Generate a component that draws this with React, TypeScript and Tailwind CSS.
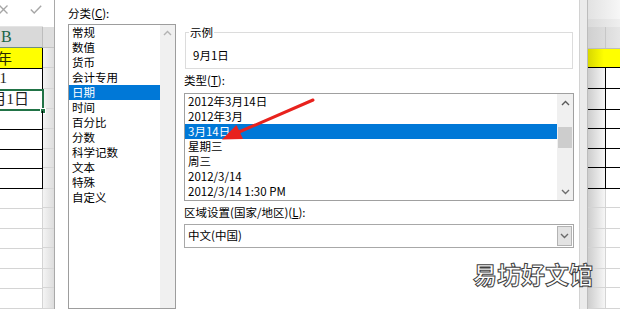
import React from "react";

const CATEGORIES = ["常规", "数值", "货币", "会计专用", "日期", "时间", "百分比", "分数", "科学记数", "文本", "特殊", "自定义"];
const TYPES = ["2012年3月14日", "2012年3月", "3月14日", "星期三", "周三", "2012/3/14", "2012/3/14 1:30 PM"];

// sheet rows below the yellow one (y 70 onwards)
const ROWS = [
  { h: "h-[21px]", dark: true },
  { h: "h-[21px]", dark: true },
  { h: "h-[20px]", dark: true },
  { h: "h-[20px]", dark: true },
  { h: "h-[20px]", dark: true },
  { h: "h-[21px]", dark: true },
  { h: "h-[20px]", dark: false },
  { h: "h-[21px]", dark: false },
  { h: "h-[20px]", dark: false },
  { h: "h-[21px]", dark: false },
  { h: "h-[20px]", dark: false },
  { h: "h-[21px]", dark: false },
];

function Chevron({ up, className }: { up?: boolean; className?: string }) {
  return (
    <svg width="9" height="6" viewBox="0 0 9 6" className={className}>
      <polyline
        points={up ? "1,5 4.5,1.5 8,5" : "1,1 4.5,4.5 8,1"}
        fill="none"
        stroke="currentColor"
        strokeWidth="1.4"
      />
    </svg>
  );
}

function LeftSheet() {
  return (
    <div className="flex h-full w-[55px] shrink-0">
      {/* column B */}
      <div className="flex w-[43px] flex-col">
        <div className="relative h-[28px] border-b border-[#e4e4e4] bg-white">
          <svg className="absolute left-[-1px] top-[5px]" width="9" height="9" viewBox="0 0 9 9">
            <path d="M0.5 0.5 L8.5 8.5 M8.5 0.5 L0.5 8.5" stroke="#a6a6a6" strokeWidth="1.3" />
          </svg>
          <svg className="absolute left-[30px] top-[5px]" width="12" height="9" viewBox="0 0 12 9">
            <path d="M0.8 4.6 L4.2 8 L11.2 0.8" fill="none" stroke="#a6a6a6" strokeWidth="1.4" />
          </svg>
        </div>
        <div className="flex h-[21px] items-center border-r border-b border-r-[#bdbdbd] border-b-[#6f8f7f] bg-[#d9d9d9] pl-[1px] font-['Liberation_Serif',serif] text-[16px] text-[#1a6446]">
          B
        </div>
        <div className="flex h-[21px] items-center justify-end overflow-hidden border-r border-b border-black bg-[#ffff00] pr-[30px] text-[15px] whitespace-nowrap text-[#2a2a00]">
          2020年
        </div>
        {ROWS.map((r, i) => (
          <div
            key={i}
            className={`relative ${r.h} border-r border-b ${r.dark ? "border-black" : "border-[#d4d4d4]"}`}
          >
            {i === 0 && (
              <div className="flex h-full items-center justify-end pr-[35px] font-['Liberation_Serif',serif] text-[15px] text-[#222]">
                1
              </div>
            )}
            {i === 1 && (
              <>
                <div className="flex h-full items-center justify-end overflow-hidden pr-[13px] font-['Liberation_Serif','Noto_Sans_CJK_SC',serif] text-[15px] whitespace-nowrap text-[#222]">
                  9月1日
                </div>
                <div className="absolute -top-px left-[-4px] right-[-2px] -bottom-px border-2 border-[#217346]" />
                <div className="absolute right-[-4px] bottom-[-4px] h-[6px] w-[6px] border border-white bg-[#217346]" />
              </>
            )}
          </div>
        ))}
      </div>
      {/* column C shaded by dialog */}
      <div className="flex w-[11px] flex-col">
        <div className="h-[28px] bg-white" />
        <div className="h-[21px] border-b border-[#c4c4c4] bg-[#dedede]" />
        <div className="h-[21px] border-b border-[#d2d2d2] bg-linear-to-r from-[#f4f4f4] to-[#dddddd]" />
        {ROWS.map((r, i) => (
          <div key={i} className={`${r.h} border-b border-[#d6d6d6] bg-linear-to-r from-[#f4f4f4] to-[#dddddd]`} />
        ))}
      </div>
      <div className="w-px bg-[#a9a9a9]" />
    </div>
  );
}

function RightSheet() {
  return (
    <div className="flex h-full w-[32px] shrink-0 flex-col overflow-hidden">
      <div className="h-[19px] bg-linear-to-r from-[#e2e2e2] to-[#f7f7f7]" />
      <div className="h-[9px] bg-linear-to-r from-[#dadada] to-[#efefef]" />
      <div className="flex h-[22px] border-b border-[#bdbdbd] bg-linear-to-r from-[#d0d0d0] to-[#e6e6e6]">
        <div className="w-[18px] border-r border-[#c7c7c7]" />
      </div>
      <div className="h-[20px] border-b border-black bg-linear-to-r from-[#d8d800] via-[#ffff00] to-[#ffff00]" />
      {ROWS.map((r, i) => (
        <div key={i} className={`flex ${r.h} border-b ${r.dark ? "border-black" : "border-[#d4d4d4]"}`}>
          <div
            className={`w-[18px] border-r bg-linear-to-r from-[#cdcdcd] to-[#f6f6f6] ${
              r.dark ? "border-black" : "border-[#d4d4d4]"
            }`}
          />
          <div className="flex-1 bg-white" />
        </div>
      ))}
    </div>
  );
}

function Dialog() {
  return (
    <div className="flex h-full w-[524px] shrink-0 gap-[8px] overflow-hidden bg-white pt-[5px] pl-[13px] text-[11.5px] text-black">
      {/* category list */}
      <div className="flex w-[108px] flex-col">
        <div className="flex h-[18px] items-center">
          分类(<span className="underline">C</span>):
        </div>
        <div className="mt-[2px] flex h-[300px] border border-[#9d9d9d]">
          <div className="flex flex-1 flex-col">
            {CATEGORIES.map((c) => (
              <div
                key={c}
                className={`h-[15px] pl-[3px] leading-[15px] whitespace-nowrap ${
                  c === "日期" ? "bg-[#0078d7] text-white" : ""
                }`}
              >
                {c}
              </div>
            ))}
          </div>
          <div className="flex w-[15px] flex-col items-center bg-[#f0f0f0] pt-[5px]">
            <Chevron up className="text-[#b3b3b3]" />
          </div>
        </div>
      </div>

      {/* right side */}
      <div className="flex w-[390px] flex-col">
        <div className="relative mt-[27px] ml-px h-[37px] w-[388px] border border-[#dcdcdc]">
          <span className="absolute top-[-9px] left-[3px] bg-white px-px leading-[16px]">示例</span>
          <div className="pt-[14px] pl-[7px] leading-[16px]">9月1日</div>
        </div>

        <div className="mt-[3px] flex h-[18px] items-center">
          类型(<span className="underline">T</span>):
        </div>
        <div className="mt-[3px] flex h-[108px] border border-[#a0a0a0]">
          <div className="flex flex-1 flex-col">
            {TYPES.map((t) => (
              <div
                key={t}
                className={`h-[15px] pl-[3px] leading-[15px] whitespace-nowrap ${
                  t === "3月14日" ? "bg-[#0078d7] text-white" : ""
                }`}
              >
                {t}
              </div>
            ))}
          </div>
          <div className="flex w-[16px] flex-col bg-[#f0f0f0]">
            <div className="flex h-[17px] items-center justify-center">
              <Chevron up className="text-[#5a5a5a]" />
            </div>
            <div className="mx-px mt-[16px] h-[21px] bg-[#cdcdcd]" />
            <div className="flex-1" />
            <div className="flex h-[17px] items-center justify-center">
              <Chevron className="text-[#6e6e6e]" />
            </div>
          </div>
        </div>

        <div className="mt-[3px] flex h-[18px] items-center">
          区域设置(国家/地区)(<span className="underline">L</span>):
        </div>
        <div className="mt-[2px] flex h-[24px] items-stretch border border-[#a8a8a8]">
          <div className="flex flex-1 items-center pl-[3px]">中文(中国)</div>
          <div className="m-px flex w-[15px] items-center justify-center border border-[#b3b3b3] bg-[#e3e3e3]">
            <Chevron className="text-[#6a6a6a]" />
          </div>
        </div>
      </div>
    </div>
  );
}

export default function App() {
  return (
    <div className="relative flex h-[309px] w-[620px] overflow-hidden bg-white font-['Noto_Sans_CJK_SC','Noto_Sans',sans-serif]">
      <LeftSheet />
      <Dialog />
      {/* dialog frame edge */}
      <div className="w-[9px] shrink-0 border-r border-l border-r-[#bcbcbc] border-l-[#d2d2d2] bg-[#ebebeb]" />
      <RightSheet />

      {/* red annotation arrow */}
      <svg className="pointer-events-none absolute inset-0" width="620" height="309" viewBox="0 0 620 309">
        <line x1="313" y1="100" x2="239" y2="132" stroke="#e8221d" strokeWidth="3" strokeLinecap="round" />
        <polygon points="222,139.5 236.5,125 243,139" fill="#e8221d" />
      </svg>

      {/* watermark */}
      <div className="pointer-events-none absolute top-[262px] left-[473px] text-[24px] leading-none font-bold whitespace-nowrap text-white [-webkit-text-stroke:1px_#3f3f3f]">
        易坊好文馆
      </div>
    </div>
  );
}
